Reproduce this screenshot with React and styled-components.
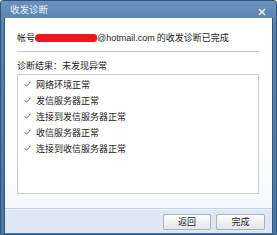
import React from "react";
import styled, { createGlobalStyle } from "styled-components";

const Global = createGlobalStyle`
  html, body { margin: 0; padding: 0; background: #ffffff; }
  body { font-family: "Noto Sans CJK SC", "Liberation Sans", sans-serif; }
`;

const Window = styled.div`
  width: 277px;
  height: 235px;
  box-sizing: border-box;
  display: flex;
  flex-direction: column;
  background: linear-gradient(180deg, #6b92bc 0%, #5682ae 10%, #4b77a4 100%);
  border: 1px solid #2f5580;
  border-radius: 3px 3px 0 0;
  padding: 0 3px 1px 3px;
`;

const TitleBar = styled.div`
  height: 17px;
  flex: none;
  display: flex;
  align-items: center;
  justify-content: space-between;
  padding: 0 7px 0 6px;
`;

const Title = styled.span`
  color: #e9f0f8;
  font-size: 9.5px;
  line-height: 1;
  margin-top: 1px;
`;

const Close = styled.svg`
  width: 8px;
  height: 8px;
  margin-top: 4px;
`;

const Body = styled.div`
  flex: 1;
  display: flex;
  flex-direction: column;
  background: #ffffff;
  border: 1px solid #2f5580;
  border-top: none;
  border-bottom: none;
  min-height: 0;
`;

const Main = styled.div`
  flex: 1;
  background: linear-gradient(180deg, #ffffff 0%, #ffffff 70%, #f4f8fc 100%);
  padding: 14px 13px 14px 12px;
  display: flex;
  flex-direction: column;
`;

const Line = styled.div`
  font-size: 9px;
  line-height: 12px;
  color: #222;
  height: 12px;
  white-space: nowrap;
  display: flex;
  align-items: center;
`;

const Latin = styled.span`
  font-family: "Liberation Sans", "Noto Sans CJK SC", sans-serif;
  font-size: 9px;
`;

const Redact = styled.span`
  display: inline-block;
  width: 62px;
  height: 8px;
  background: #f0141c;
  border-radius: 4px 3px 3px 4px;
`;

const Separator = styled.div`
  height: 1px;
  background: #c7c9cc;
  margin: 7px 0 8px;
`;

const ListBox = styled.div`
  margin-top: 2px;
  flex: 1;
  border: 1px solid #cbcdd0;
  background: #fff;
  padding: 1px 0 0 6px;
  display: flex;
  flex-direction: column;
`;

const Item = styled.div`
  display: flex;
  align-items: center;
  height: 16px;
  font-size: 9px;
  color: #222;
  white-space: nowrap;
`;

const Check = styled.svg`
  width: 7px;
  height: 6px;
  margin-right: 5px;
  flex: none;
`;

const Footer = styled.div`
  height: 24px;
  flex: none;
  background: #dde8f4;
  border-top: 1px solid #c3d1e1;
  box-shadow: inset 0 1px 0 #f3f7fb;
  display: flex;
  align-items: center;
  justify-content: flex-end;
  gap: 5px;
  padding: 0 7px 0 0;
`;

const Button = styled.button`
  width: ${(p) => p.w}px;
  height: 16px;
  margin-top: 1px;
  padding: 0;
  border: 1px solid #a9b3be;
  border-radius: 2px;
  background: linear-gradient(180deg, #fdfdfd 0%, #f1f2f4 50%, #e3e6ea 100%);
  font-family: "Noto Sans CJK SC", sans-serif;
  font-size: 9px;
  color: #222;
  line-height: 1;
`;

const items = [
  "网络环境正常",
  "发信服务器正常",
  "连接到发信服务器正常",
  "收信服务器正常",
  "连接到收信服务器正常",
];

export default function App() {
  return (
    <>
      <Global />
      <Window>
        <TitleBar>
          <Title>收发诊断</Title>
          <Close viewBox="0 0 8 8">
            <path d="M1 1 L7 7 M7 1 L1 7" stroke="#e6eef7" strokeWidth="1.5" />
          </Close>
        </TitleBar>
        <Body>
          <Main>
            <Line>
              帐号<Redact />
              <Latin>@hotmail.com</Latin>&nbsp;的收发诊断已完成
            </Line>
            <Separator />
            <Line>诊断结果：未发现异常</Line>
            <ListBox>
              {items.map((t) => (
                <Item key={t}>
                  <Check viewBox="0 0 7 6">
                    <path d="M0.5 3.2 L2.5 5.3 L6.6 0.6" fill="none" stroke="#555" strokeWidth="0.9" />
                  </Check>
                  {t}
                </Item>
              ))}
            </ListBox>
          </Main>
          <Footer>
            <Button w={48}>返回</Button>
            <Button w={49}>完成</Button>
          </Footer>
        </Body>
      </Window>
    </>
  );
}
